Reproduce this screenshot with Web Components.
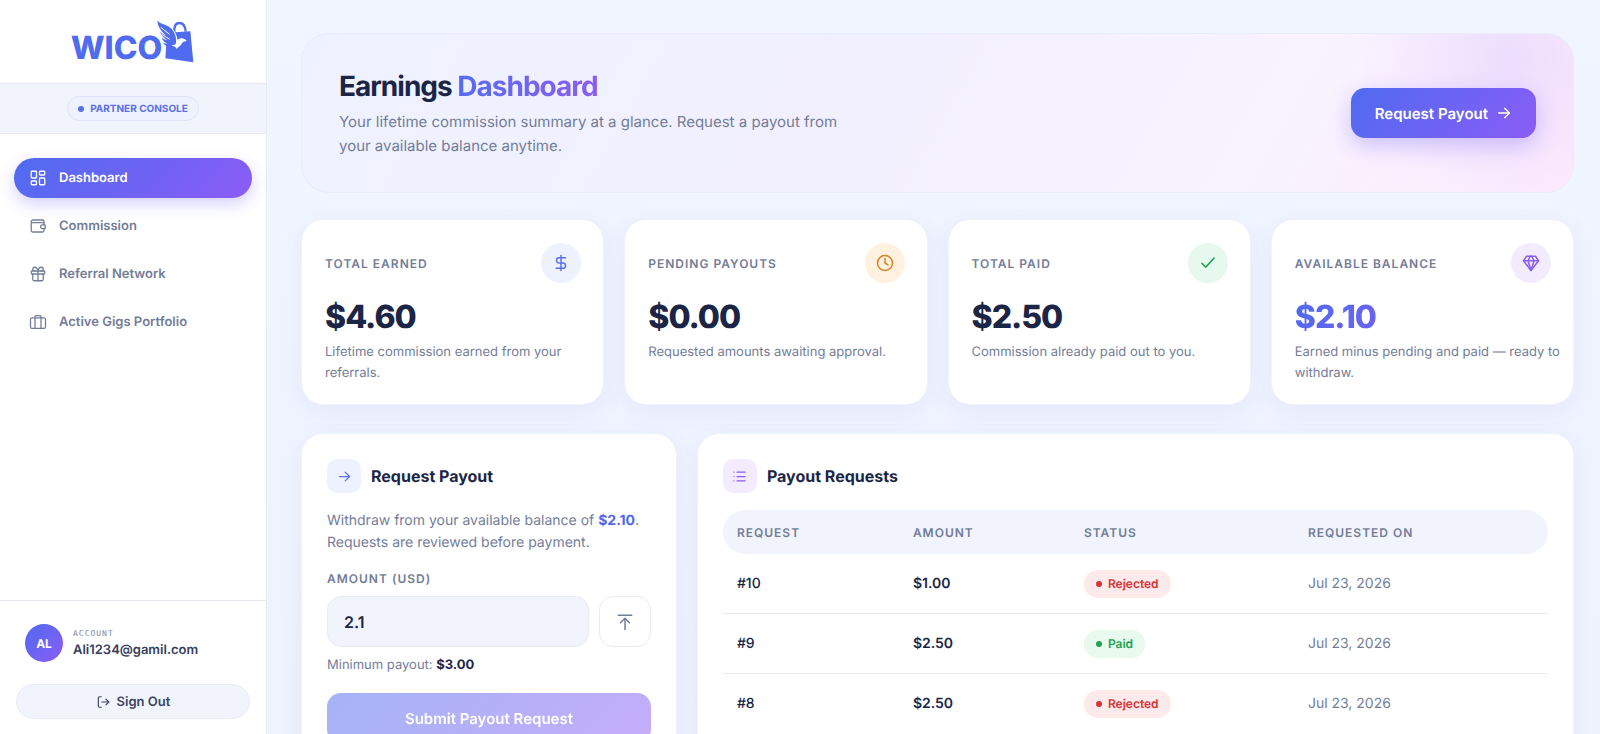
<!DOCTYPE html>
<html lang="en">
<head>
<meta charset="utf-8">
<meta name="viewport" content="width=device-width, initial-scale=1">
<title>Earnings Dashboard</title>
<style>
  :root {
    --ink: #1b2545;
    --muted: #737d98;
    --line: #e9ebf4;
    --tint: #f1f4fd;
    --primary: #4f6bf0;
    --accent: #8b5cf6;
    --gradient: linear-gradient(135deg, #4f6bf0, #8b5cf6);
  }

  body {
    margin: 0;
    background: #f0f4ff;
    color: var(--ink);
    font-family: Inter, "Liberation Sans", sans-serif;
    font-size: 14px;
    text-rendering: geometricPrecision;
  }
</style>
</head>
<body>
<app-shell>
  <side-bar slot="sidebar" initials="AL" account="Ali1234@gamil.com">
    <nav-item icon="dashboard" active>Dashboard</nav-item>
    <nav-item icon="wallet">Commission</nav-item>
    <nav-item icon="gift">Referral Network</nav-item>
    <nav-item icon="briefcase">Active Gigs Portfolio</nav-item>
  </side-bar>

  <hero-banner>
    <span slot="lead">Earnings</span>
    <span slot="highlight">Dashboard</span>
    Your lifetime commission summary at a glance. Request a payout from your available balance anytime.
  </hero-banner>

  <stat-grid>
    <stat-card label="Total earned" value="$4.60" icon="dollar" tone="blue">Lifetime commission earned from your referrals.</stat-card>
    <stat-card label="Pending payouts" value="$0.00" icon="clock" tone="amber">Requested amounts awaiting approval.</stat-card>
    <stat-card label="Total paid" value="$2.50" icon="check" tone="green">Commission already paid out to you.</stat-card>
    <stat-card label="Available balance" value="$2.10" icon="gem" tone="violet" highlight>Earned minus pending and paid — ready to withdraw.</stat-card>
  </stat-grid>

  <panel-row>
    <panel-card heading="Request Payout" icon="arrow-right" tone="blue">
      <payout-form balance="$2.10" amount="2.1" minimum="$3.00"></payout-form>
    </panel-card>
    <panel-card heading="Payout Requests" icon="list" tone="violet">
      <payout-table></payout-table>
    </panel-card>
  </panel-row>
</app-shell>

<script>
const ICONS = {
  'dashboard': '<rect x="3" y="3" width="7" height="9" rx="1"/><rect x="14" y="3" width="7" height="5" rx="1"/><rect x="14" y="12" width="7" height="9" rx="1"/><rect x="3" y="16" width="7" height="5" rx="1"/>',
  'wallet': '<path d="M20 10V6a2 2 0 0 0-2-2H5.5A2.5 2.5 0 0 0 3 6.500V18a2 2 0 0 0 2 2h13a2 2 0 0 0 2-2v-2"/><path d="M3.500 7.500H20"/><path d="M21.500 10.500H18a2.500 2.500 0 0 0 0 5h3.500z"/>',
  'gift': '<rect x="3" y="8" width="18" height="4" rx="1"/><path d="M12 8v13"/><path d="M19 12v7a2 2 0 0 1-2 2H7a2 2 0 0 1-2-2v-7"/><path d="M7.500 8a2.500 2.500 0 0 1 0-5C11 3 12 8 12 8s1-5 4.500-5a2.500 2.500 0 0 1 0 5"/>',
  'briefcase': '<rect x="2" y="6.500" width="20" height="14" rx="2"/><path d="M8 20.500V5A1.500 1.500 0 0 1 9.500 3.500h5A1.500 1.500 0 0 1 16 5v15.500"/>',
  'sign-out': '<path d="M9 3H6a2 2 0 0 0-2 2v14a2 2 0 0 0 2 2h3"/><path d="M10 12h12"/><path d="m17 7 5 5-5 5"/>',
  'dollar': '<path d="M12 2v20"/><path d="M18 5H9.500a3.500 3.500 0 0 0 0 7h5a3.500 3.500 0 0 1 0 7H5.500"/>',
  'clock': '<circle cx="12" cy="12" r="10"/><path d="M12 6v6l4 2.500"/>',
  'check': '<path d="M20 5.500 9 17.500l-5-5"/>',
  'gem': '<path d="M6 3h12l4 6-10 13L2 9Z"/><path d="M11 3 8 9l4 13 4-13-3-6"/><path d="M2 9h20"/>',
  'arrow-right': '<path d="M4 12h16"/><path d="m13 5 7 7-7 7"/>',
  'list': '<path d="M8 5h13M8 12h13M8 19h13M3 5h.01M3 12h.01M3 19h.01"/>',
  'to-top': '<path d="M3 3h18"/><path d="M12 22V8"/><path d="m6 13 6-6 6 6"/>'
};

/**
 * Attach an open shadow root filled from an HTML string.
 */
function render(host, html) {
  const template = document.createElement('template');
  template.innerHTML = html;
  host.attachShadow({ mode: 'open' }).appendChild(template.content.cloneNode(true));
}

/**
 * Line icon. Takes its colour from the text around it, its size from
 * --icon-size and its line width from --icon-stroke.
 */
class UiIcon extends HTMLElement {
  connectedCallback() {
    if (this.shadowRoot) return;
    render(this, `
      <style>
        :host { display: block; flex: none; width: var(--icon-size, 18px); height: var(--icon-size, 18px); }
        svg { display: block; width: 100%; height: 100%; stroke-width: var(--icon-stroke, 2); }
      </style>
      <svg viewBox="0 0 24 24" fill="none" stroke="currentColor"
        stroke-linecap="round" stroke-linejoin="round" aria-hidden="true">${ICONS[this.getAttribute('name')]}</svg>
    `);
  }
}

/**
 * Wordmark with a winged shopping bag.
 */
class BrandLogo extends HTMLElement {
  connectedCallback() {
    if (this.shadowRoot) return;
    render(this, `
      <style>
        :host { display: block; }
        a {
          display: flex;
          align-items: flex-end;
          color: var(--primary);
          font-size: 32px;
          font-weight: 800;
          line-height: 30px;
          text-decoration: none;
        }
        svg { display: block; width: 39px; height: 43px; margin-left: -6px; }
      </style>
      <a href="#">
        <span>WICO</span>
        <svg viewBox="470 60 117 129" aria-hidden="true">
          <path d="M503 98 573 94 582 187 498 175Z" fill="currentColor"/>
          <path d="M525 98c-2-18 4-29 15-29s18 9 19 26" fill="none" stroke="currentColor" stroke-width="7"/>
          <path d="M471 58c14 16 36 16 48 28 8 8 13 18 16 34 7-7 20-7 27 3-10 1-13 4-16 10-3 6-9 7-14 14-2-6-7-9-15-9-12-1-22-7-28-17-9-9-19-40-18-63Z" fill="#fff"/>
          <path d="M474 62c12 12 33 12 43 25 11 13 16 30 12 46-4 2-8 2-11 2l4 8c-14 0-26-5-32-16 5 3 10 5 15 5-9-4-16-11-19-20 6 5 12 8 18 9-11-8-19-16-22-26 6 5 12 9 18 11-12-10-24-23-26-44Z" fill="currentColor"/>
          <path d="m484 82 27 21M486 102l25 16" fill="none" stroke="#fff" stroke-width="3"/>
        </svg>
      </a>
    `);
  }
}

/**
 * One link of the main navigation.
 */
class NavItem extends HTMLElement {
  connectedCallback() {
    if (this.shadowRoot) return;
    render(this, `
      <style>
        :host { display: block; }
        a {
          --icon-size: 18px;
          --icon-stroke: 1.7;
          display: flex;
          align-items: center;
          gap: 12px;
          height: 40px;
          padding: 0 15px;
          border-radius: 20px;
          color: var(--muted);
          font-size: 13px;
          font-weight: 600;
          text-decoration: none;
        }
        :host([active]) a {
          background: var(--gradient);
          color: #fff;
          box-shadow: 0 6px 16px rgba(99, 91, 246, .28);
        }
      </style>
      <a href="#"><ui-icon name="${this.getAttribute('icon')}"></ui-icon><slot></slot></a>
    `);
    if (this.hasAttribute('active')) {
      this.shadowRoot.querySelector('a').setAttribute('aria-current', 'page');
    }
  }
}

/**
 * Left column: brand, navigation and account.
 */
class SideBar extends HTMLElement {
  connectedCallback() {
    if (this.shadowRoot) return;
    render(this, `
      <style>
        :host {
          display: flex;
          flex-direction: column;
          box-sizing: border-box;
          height: 100%;
          background: #fff;
          border-right: 1px solid var(--line);
        }
        .brand {
          display: flex;
          justify-content: center;
          padding: 20px 0;
          border-bottom: 1px solid var(--line);
        }
        .console {
          display: flex;
          justify-content: center;
          padding: 12px 0;
          background: var(--tint);
          border-bottom: 1px solid var(--line);
        }
        .pill {
          display: flex;
          align-items: center;
          gap: 6px;
          height: 23px;
          padding: 0 10px;
          border: 1px solid #e0e4f8;
          border-radius: 13px;
          background: #eef1fe;
          color: #5a6fe8;
          font-size: 10px;
          font-weight: 700;
          text-transform: uppercase;
        }
        .pill::before {
          content: "";
          width: 6px;
          height: 6px;
          border-radius: 50%;
          background: currentColor;
        }
        nav {
          display: flex;
          flex: 1;
          flex-direction: column;
          gap: 8px;
          padding: 24px 14px;
        }
        .account {
          display: flex;
          flex-direction: column;
          gap: 22px;
          padding: 23px 16px 15px;
          border-top: 1px solid var(--line);
        }
        .who { display: flex; align-items: center; gap: 10px; padding: 0 9px; }
        .avatar {
          display: grid;
          place-items: center;
          width: 38px;
          height: 38px;
          border-radius: 50%;
          background: var(--gradient);
          color: #fff;
          font-size: 12px;
          font-weight: 700;
        }
        .caption {
          color: #7e869c;
          font-family: "DejaVu Sans Mono", monospace;
          font-size: 8px;
          letter-spacing: 1px;
          line-height: 14px;
          text-transform: uppercase;
        }
        .name { color: #353e5a; font-size: 13px; font-weight: 600; line-height: 18px; }
        button {
          --icon-size: 14px;
          display: flex;
          align-items: center;
          justify-content: center;
          gap: 7px;
          height: 35px;
          border: 1px solid #e9edfb;
          border-radius: 18px;
          background: var(--tint);
          color: #3c4562;
          font: 600 13px Inter, sans-serif;
          text-rendering: inherit;
        }
      </style>
      <div class="brand"><brand-logo></brand-logo></div>
      <div class="console"><span class="pill">Partner console</span></div>
      <nav><slot></slot></nav>
      <div class="account">
        <div class="who">
          <span class="avatar">${this.getAttribute('initials')}</span>
          <div>
            <div class="caption">Account</div>
            <div class="name">${this.getAttribute('account')}</div>
          </div>
        </div>
        <button type="button"><ui-icon name="sign-out"></ui-icon>Sign Out</button>
      </div>
    `);
  }
}

/**
 * Page frame: fixed sidebar column, scrolling content column.
 */
class AppShell extends HTMLElement {
  connectedCallback() {
    if (this.shadowRoot) return;
    render(this, `
      <style>
        :host { display: grid; grid-template-columns: 267px 1fr; height: 100vh; }
        aside { min-height: 0; }
        main {
          display: flex;
          flex-direction: column;
          gap: 28px;
          min-width: 0;
          padding: 33px 26px 33px 34px;
          overflow-y: auto;
          scrollbar-width: none;
          background: linear-gradient(#f1f5ff, #eff3fe);
        }
      </style>
      <aside><slot name="sidebar"></slot></aside>
      <main><slot></slot></main>
    `);
  }
}

/**
 * Title banner with the main action.
 */
class HeroBanner extends HTMLElement {
  connectedCallback() {
    if (this.shadowRoot) return;
    render(this, `
      <style>
        :host {
          display: flex;
          flex: none;
          align-items: center;
          justify-content: space-between;
          gap: 24px;
          margin-bottom: -2px;
          padding: 34px 37px;
          border: 1px solid #ebebfa;
          border-radius: 28px;
          background:
            radial-gradient(circle at 95% 16%, rgba(139, 92, 246, .12), rgba(139, 92, 246, 0) 150px),
            linear-gradient(120deg, #eef2ff 0%, #f2effe 45%, #f8f3ff 75%, #fdebfd 100%);
        }
        h1 { margin: 0 0 6px; font-size: 28px; font-weight: 700; letter-spacing: -1px; line-height: 36px; }
        .highlight {
          background: linear-gradient(90deg, #566cf0, #8b5cf6);
          -webkit-background-clip: text;
          background-clip: text;
          color: transparent;
        }
        p { max-width: 520px; margin: 0; color: var(--muted); font-size: 15px; line-height: 24px; }
        button {
          --icon-size: 16px;
          display: flex;
          flex: none;
          align-items: center;
          gap: 8px;
          height: 50px;
          padding: 0 24px;
          border: 0;
          border-radius: 14px;
          background: var(--gradient);
          color: #fff;
          font: 600 15px Inter, sans-serif;
          text-rendering: inherit;
          box-shadow: 0 8px 22px rgba(99, 91, 246, .3);
        }
      </style>
      <div>
        <h1><slot name="lead"></slot> <span class="highlight"><slot name="highlight"></slot></span></h1>
        <p><slot></slot></p>
      </div>
      <button type="button">Request Payout <ui-icon name="arrow-right"></ui-icon></button>
    `);
  }
}

/**
 * Equal columns for the stat cards.
 */
class StatGrid extends HTMLElement {
  connectedCallback() {
    if (this.shadowRoot) return;
    render(this, `
      <style>
        :host { display: grid; flex: none; grid-template-columns: repeat(4, 1fr); gap: 20px; }
      </style>
      <slot></slot>
    `);
  }
}

const TONES = `
  .badge { color: #5a6ff0; background: #eef1fe; }
  :host([tone="amber"]) .badge { color: #d9821f; background: #fef1e0; }
  :host([tone="green"]) .badge { color: #22a35a; background: #e7f9ee; }
  :host([tone="violet"]) .badge { color: #8b5cf6; background: #f2ecfe; }
`;

/**
 * Card with one figure and a note below it.
 */
class StatCard extends HTMLElement {
  connectedCallback() {
    if (this.shadowRoot) return;
    render(this, `
      <style>
        :host {
          display: block;
          padding: 23px 12px 20px 23px;
          border: 1px solid #eff1fb;
          border-radius: 22px;
          background: #fff;
          box-shadow: 0 6px 24px rgba(90, 90, 200, .08);
        }
        header { display: flex; align-items: center; justify-content: space-between; padding-right: 10px; }
        h2 {
          margin: 0;
          color: var(--muted);
          font-size: 12px;
          font-weight: 600;
          letter-spacing: 1px;
          text-transform: uppercase;
        }
        .badge { display: grid; place-items: center; width: 40px; height: 40px; border-radius: 50%; }
        .value { margin: 14px 0 5px; font-size: 32px; font-weight: 800; letter-spacing: -1px; line-height: 40px; }
        :host([highlight]) .value {
          width: fit-content;
          background: linear-gradient(135deg, #4f6bf0, #6f62f2);
          -webkit-background-clip: text;
          background-clip: text;
          color: transparent;
        }
        p { margin: 0; color: var(--muted); font-size: 13px; line-height: 21px; }
        ${TONES}
      </style>
      <header>
        <h2>${this.getAttribute('label')}</h2>
        <span class="badge"><ui-icon name="${this.getAttribute('icon')}"></ui-icon></span>
      </header>
      <div class="value">${this.getAttribute('value')}</div>
      <p><slot></slot></p>
    `);
  }
}

/**
 * Narrow form panel beside a wide table panel.
 */
class PanelRow extends HTMLElement {
  connectedCallback() {
    if (this.shadowRoot) return;
    render(this, `
      <style>
        :host { display: grid; flex: none; grid-template-columns: 3fr 7fr; gap: 20px; }
      </style>
      <slot></slot>
    `);
  }
}

/**
 * White panel with an icon and a heading.
 */
class PanelCard extends HTMLElement {
  connectedCallback() {
    if (this.shadowRoot) return;
    render(this, `
      <style>
        :host {
          display: block;
          min-width: 0;
          padding: 25px;
          border: 1px solid #eff1fb;
          border-radius: 22px;
          background: #fff;
          box-shadow: 0 6px 24px rgba(90, 90, 200, .08);
        }
        header { display: flex; align-items: center; gap: 10px; }
        h2 { margin: 0; font-size: 16px; font-weight: 700; }
        .badge {
          --icon-size: 15px;
          display: grid;
          place-items: center;
          width: 34px;
          height: 34px;
          border-radius: 10px;
        }
        ${TONES}
      </style>
      <header>
        <span class="badge"><ui-icon name="${this.getAttribute('icon')}"></ui-icon></span>
        <h2>${this.getAttribute('heading')}</h2>
      </header>
      <slot></slot>
    `);
  }
}

/**
 * Payout request form.
 */
class PayoutForm extends HTMLElement {
  connectedCallback() {
    if (this.shadowRoot) return;
    render(this, `
      <style>
        :host { display: block; }
        p { margin: 17px 0; color: var(--muted); font-size: 14px; line-height: 22px; }
        p b { color: #5068ee; font-weight: 700; }
        label {
          display: block;
          margin-bottom: 9px;
          color: var(--muted);
          font-size: 12px;
          font-weight: 600;
          letter-spacing: 1px;
          line-height: 16px;
          text-transform: uppercase;
        }
        .field { display: flex; gap: 10px; }
        input {
          flex: 1;
          box-sizing: border-box;
          min-width: 0;
          height: 51px;
          padding: 0 16px;
          border: 1px solid var(--line);
          border-radius: 14px;
          background: var(--tint);
          color: var(--ink);
          font: 600 16px Inter, sans-serif;
          text-rendering: inherit;
        }
        .max {
          display: grid;
          place-items: center;
          width: 52px;
          border: 1px solid var(--line);
          border-radius: 14px;
          background: #fff;
          color: var(--muted);
        }
        small { display: block; margin: 8px 0 18px; color: var(--muted); font-size: 13px; line-height: 20px; }
        small b { color: var(--ink); font-weight: 700; }
        .submit {
          width: 100%;
          height: 50px;
          border: 0;
          border-radius: 14px;
          background: var(--gradient);
          color: #fff;
          font: 600 15px Inter, sans-serif;
          text-rendering: inherit;
          opacity: .5;
        }
      </style>
      <form>
        <p>Withdraw from your available balance of <b>${this.getAttribute('balance')}</b>.<br>Requests are reviewed before payment.</p>
        <label for="amount">Amount (USD)</label>
        <div class="field">
          <input id="amount" type="text" inputmode="decimal" value="${this.getAttribute('amount')}">
          <button class="max" type="button" aria-label="Use full balance"><ui-icon name="to-top"></ui-icon></button>
        </div>
        <small>Minimum payout: <b>${this.getAttribute('minimum')}</b></small>
        <button class="submit" type="submit" disabled>Submit Payout Request</button>
      </form>
    `);
  }
}

/**
 * Coloured pill for the state of a request.
 */
class StatusBadge extends HTMLElement {
  connectedCallback() {
    if (this.shadowRoot) return;
    render(this, `
      <style>
        :host {
          display: inline-flex;
          align-items: center;
          gap: 6px;
          height: 28px;
          padding: 0 12px;
          border-radius: 14px;
          background: #fdeaea;
          color: #d83438;
          font-size: 12px;
          font-weight: 600;
          vertical-align: middle;
        }
        :host([state="paid"]) { background: #e8f9ee; color: #1fa254; }
        :host::before {
          content: "";
          width: 6px;
          height: 6px;
          border-radius: 50%;
          background: currentColor;
        }
      </style>
      <slot></slot>
    `);
  }
}

/**
 * Table of past payout requests.
 */
class PayoutTable extends HTMLElement {
  connectedCallback() {
    if (this.shadowRoot) return;
    const rows = [
      { id: '#10', amount: '$1.00', status: 'Rejected', date: 'Jul 23, 2026' },
      { id: '#9', amount: '$2.50', status: 'Paid', date: 'Jul 23, 2026' },
      { id: '#8', amount: '$2.50', status: 'Rejected', date: 'Jul 23, 2026' }
    ];
    render(this, `
      <style>
        :host { display: block; }
        table { width: 100%; margin-top: 17px; border-collapse: separate; border-spacing: 0; table-layout: fixed; }
        th, td { padding: 0 14px; text-align: left; }
        th {
          height: 44px;
          background: var(--tint);
          color: var(--muted);
          font-size: 12px;
          font-weight: 600;
          letter-spacing: 1px;
          text-transform: uppercase;
        }
        th:first-child { width: 148px; border-radius: 22px 0 0 22px; }
        th:nth-child(2) { width: 143px; }
        th:nth-child(3) { width: 196px; }
        th:last-child { border-radius: 0 22px 22px 0; }
        td { height: 59px; border-bottom: 1px solid var(--line); font-weight: 500; }
        tr:last-child td { border-bottom: 0; }
        .amount { font-weight: 600; }
        .date { color: var(--muted); font-weight: 400; }
      </style>
      <table>
        <thead>
          <tr><th>Request</th><th>Amount</th><th>Status</th><th>Requested on</th></tr>
        </thead>
        <tbody>
          ${rows.map((row) => `
            <tr>
              <td>${row.id}</td>
              <td class="amount">${row.amount}</td>
              <td><status-badge state="${row.status.toLowerCase()}">${row.status}</status-badge></td>
              <td class="date">${row.date}</td>
            </tr>`).join('')}
        </tbody>
      </table>
    `);
  }
}

// Register custom elements
customElements.define('ui-icon', UiIcon);
customElements.define('brand-logo', BrandLogo);
customElements.define('nav-item', NavItem);
customElements.define('side-bar', SideBar);
customElements.define('hero-banner', HeroBanner);
customElements.define('stat-grid', StatGrid);
customElements.define('stat-card', StatCard);
customElements.define('panel-row', PanelRow);
customElements.define('panel-card', PanelCard);
customElements.define('payout-form', PayoutForm);
customElements.define('status-badge', StatusBadge);
customElements.define('payout-table', PayoutTable);
customElements.define('app-shell', AppShell);
</script>
</body>
</html>
